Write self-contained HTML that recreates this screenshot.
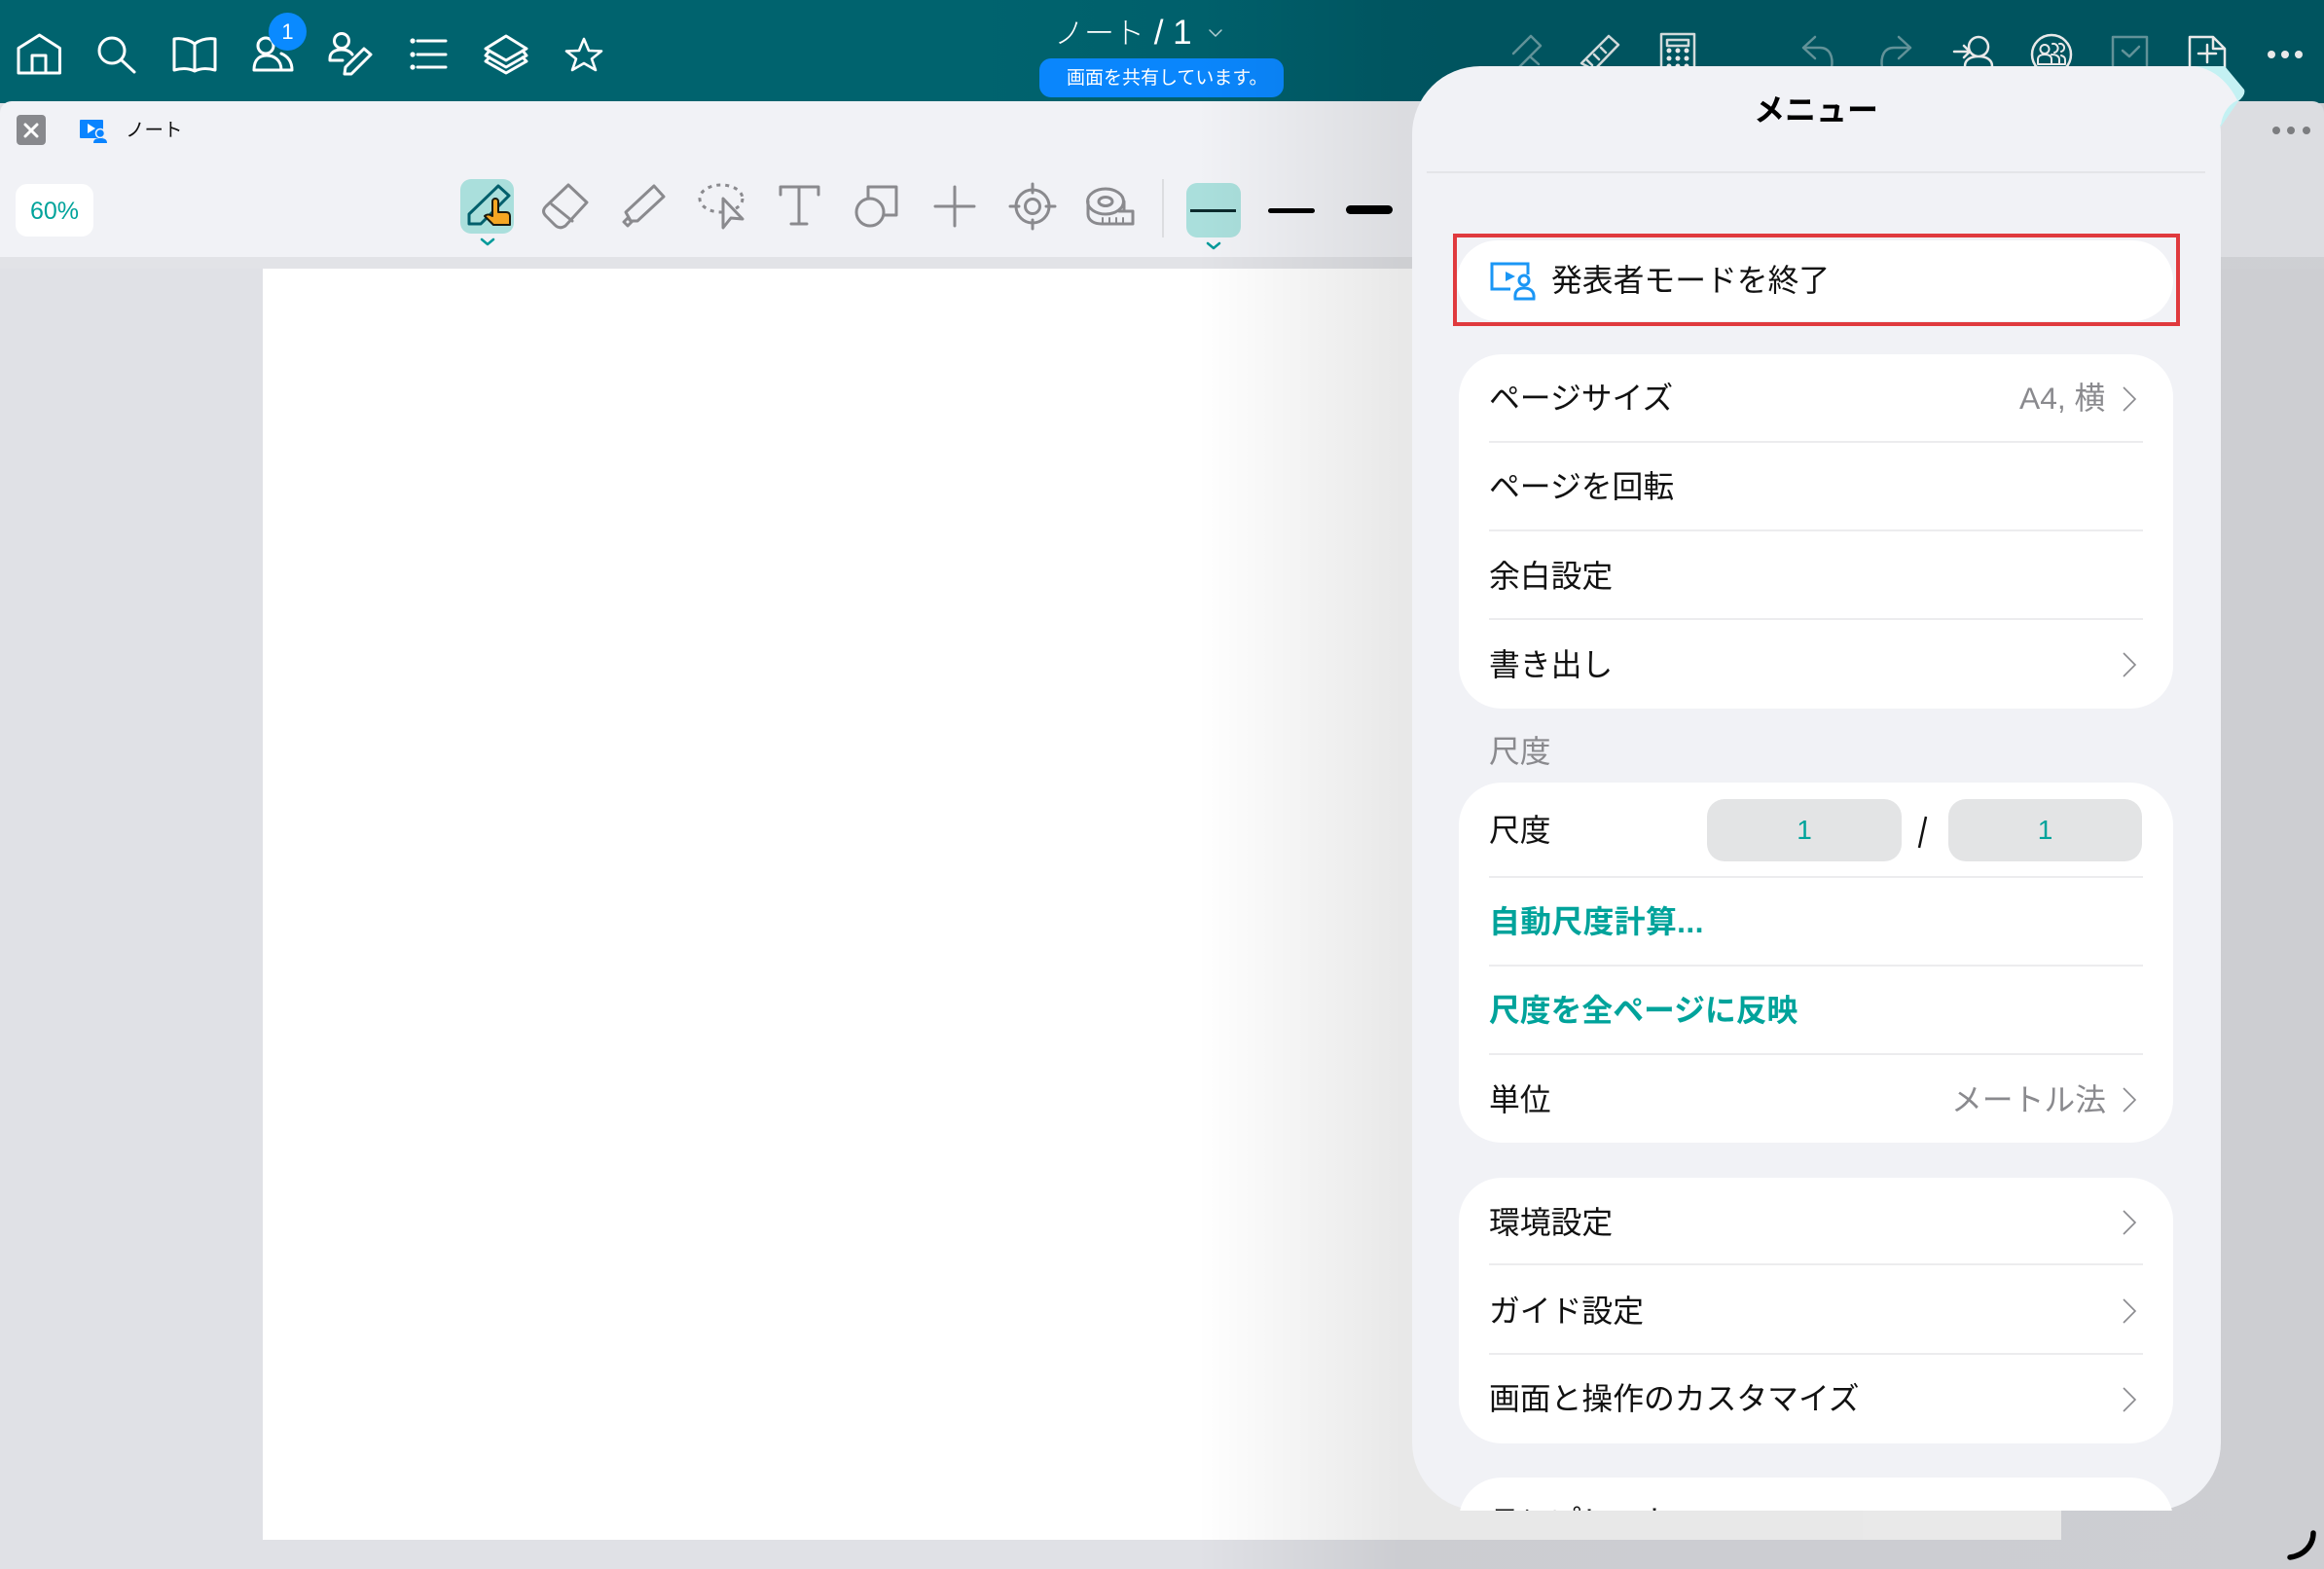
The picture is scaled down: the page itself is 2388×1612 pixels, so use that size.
<!DOCTYPE html>
<html lang="ja"><head><meta charset="utf-8"><title>メニュー</title>
<style>
html,body{margin:0;padding:0;width:2388px;height:1612px;overflow:hidden;background:#e0e1e6}
*{box-sizing:border-box}
body{position:relative;font-family:"Liberation Sans","Noto Sans CJK JP",sans-serif;color:#111}
.a{position:absolute}
.t{position:absolute;white-space:nowrap;line-height:44px;height:44px;font-size:31.8px}
.g{color:#8a8a8e}
.c{color:#00a39b;font-weight:700}
.sep{position:absolute;left:1530px;width:672px;height:2px;background:#ececee}
.card{position:absolute;left:1499px;width:734px;background:#fff;border-radius:44px}
svg{position:absolute;left:0;top:0}
</style></head><body>
<div class="a" style="left:0;top:0;width:2388px;height:106px;background:linear-gradient(to right,#00636e 0,#00636e 1000px,#005c68 1500px,#005c68 2388px)"></div>
<div class="a" style="left:0;top:104px;width:2388px;height:160px;background:#f1f2f6;border-radius:12px 12px 0 0"></div>
<div class="a" style="left:0;top:264px;width:2388px;height:12px;background:#e2e3e7"></div>
<div class="a" style="left:270px;top:276px;width:1848px;height:1306px;background:#fff"></div>
<div class="a" style="left:16px;top:189px;width:80px;height:54px;background:#fff;border-radius:12px"></div>
<div class="a" style="left:473px;top:184px;width:55px;height:56px;background:#aadfdc;border-radius:11px"></div>
<div class="a" style="left:1219px;top:188px;width:56px;height:56px;background:#aadfdc;border-radius:11px"></div>
<div class="a" style="left:1194px;top:184px;width:2px;height:60px;background:#dcdde0"></div>
<div class="a" style="left:1223px;top:215px;width:47px;height:3px;background:#0b2a2c"></div>
<div class="a" style="left:1303px;top:214px;width:48px;height:5px;background:#000;border-radius:3px"></div>
<div class="a" style="left:1383px;top:211px;width:48px;height:9px;background:#000;border-radius:5px"></div>
<div class="a" style="left:1068px;top:60px;width:251px;height:40px;background:#0a86fc;border-radius:12px"></div>
<div class="a" style="left:276px;top:13px;width:39px;height:39px;background:#0a8aff;border-radius:50%;z-index:3"></div>
<div class="t" style="left:276px;top:11px;width:39px;text-align:center;color:#fff;font-size:22px;z-index:4">1</div>
<div class="t" style="left:1083px;top:12px;color:#fff;font-size:31px;font-weight:300">ノート<span style="font-family:'Liberation Sans';font-size:35px"> / 1</span></div>
<div class="t" style="left:1096px;top:59px;color:#fff;font-size:19px">画面を共有しています。</div>
<div class="a" style="left:17px;top:118px;width:30px;height:31px;background:#88898d;border-radius:4px"></div>
<div class="t" style="left:129px;top:112px;font-size:19.5px">ノート</div>
<div class="t" style="left:16px;top:195px;width:80px;text-align:center;color:#00a39b;font-size:25px">60%</div>

<svg width="2388" height="1612" viewBox="0 0 2388 1612" fill="none" stroke-linecap="round" stroke-linejoin="round">
<g stroke="#fff" stroke-width="3">
<path d="M19 75V49.5L40.5 36L61.5 49.5V75Z M33 75V57H47V75"/>
<circle cx="115" cy="52" r="13"/><path d="M125 62L138 74"/>
<path d="M200 45C193 40 186 39 179 40V72C186 70 194 70 200 73C206 70 214 70 221 72V40C214 39 207 40 200 45V72"/>
<circle cx="273" cy="47" r="8"/><path d="M261 72C261 60 268 57 274 57C281 57 289 61 289 72ZM289 72H300C300 63 296 58 289 55"/>
<circle cx="351" cy="42" r="7.5"/><path d="M339 62V60C339 54 344 51 351 51C356 51 360 53 362 56M339 62H352M355 69L374 50L381 56L361 76L354 76Z"/>
<path d="M429 42H458M429 56H458M429 69H458"/>
<path d="M520 37L541 50L520 62L499 50ZM503 52L499 57L520 69L541 57L537 52M503 59L499 63L520 75L541 63L537 59"/>
<path d="M600 40L605 52L618 52.5L608 60.5L612 72L600 65L588 72L592 60.5L582 52.5L595 52Z" stroke-width="2.6"/>
<path d="M1243 31L1249 37L1255 31" stroke-width="1.5" opacity=".7"/>
<g opacity=".9">
<path d="M1653 37L1663 46L1638 72L1625 65ZM1645 49L1650 54M1638 56L1643 61M1631 62L1636 67" stroke-width="2.5"/>
<path d="M1707 72V35H1741V72M1713 41H1735V47H1713Z" stroke-width="2.5"/>
</g>
<path d="M2033 38m-10 10a10 10 0 1 0 20 0a10 10 0 1 0 -20 0M2019 68C2019 62 2024 58 2033 58C2042 58 2047 62 2047 68M2008 53H2024M2018 47L2024 53L2018 59" stroke-width="2.5"/>
<circle cx="2108" cy="56" r="20" stroke-width="2.5"/>
<path d="M2094 66V61C2094 57 2098 56 2101 56C2105 56 2108 57 2108 61V66ZM2101 46a4.5 4.5 0 1 0 .01 0M2109 45a4.5 4.5 0 0 1 2 9M2108 56C2113 56 2116 58 2116 61V66H2108M2116 45a4 4 0 0 1 2 8M2118 57C2121 58 2122 59 2122 62V66H2116" stroke-width="2"/>
<path d="M2250 72V38H2274L2286 50V72M2274 38V50H2286M2268 46V64M2259 55H2277" stroke-width="2.5"/>
</g>
<g fill="#fff" stroke="none">
<circle cx="424" cy="42" r="2.6"/><circle cx="424" cy="56" r="2.6"/><circle cx="424" cy="69" r="2.6"/>
<circle cx="2334" cy="56" r="4"/><circle cx="2348" cy="56" r="4"/><circle cx="2362" cy="56" r="4"/>
<circle cx="1715" cy="52" r="2.5"/><circle cx="1724" cy="52" r="2.5"/><circle cx="1733" cy="52" r="2.5"/>
<circle cx="1715" cy="60" r="2.5"/><circle cx="1724" cy="60" r="2.5"/><circle cx="1733" cy="60" r="2.5"/>
<circle cx="1715" cy="68" r="2.5"/><circle cx="1724" cy="68" r="2.5"/><circle cx="1733" cy="68" r="2.5"/>
</g>
<g stroke="#fff" stroke-width="2.5" opacity=".42">
<path d="M1865 38L1853 49L1865 60M1853 49H1870C1880 49 1884 58 1882 70"/>
<path d="M1951 38L1963 49L1951 60M1963 49H1946C1936 49 1932 58 1934 70"/>
<path d="M2171 70V38H2206V70M2181 52L2188 58L2198 48"/>
<path d="M1573 37L1583 47L1572 58L1581 66M1573 37L1555 55M1572 58L1560 70"/>
</g>
<path d="M26 128L38 140M38 128L26 140" stroke="#fff" stroke-width="3"/>
<rect x="82" y="123" width="24" height="19" fill="#0a84ff" rx="1"/>
<path d="M90 127L98 132L90 137Z" fill="#fff"/>
<circle cx="103" cy="137" r="4.5" fill="#0a84ff" stroke="#f1f2f6" stroke-width="1.5"/>
<path d="M96 147C96 143 99 142 103 142C107 142 110 143 110 147Z" fill="#0a84ff"/>
<path d="M482 220L512 191L523 201L494 230H482Z" stroke="#005f6c" stroke-width="3"/>
<path d="M506 207C506 203 512 203 512 207V218H520C523 218 524 220 524 222V231H507L498 222C500 220 503 220 506 222Z" fill="#f5a623" stroke="#1a1a10" stroke-width="2"/>
<path d="M495 246L501 251L507 246M1241 250L1247 255L1253 250" stroke="#009a9a" stroke-width="2.5"/>
<g stroke="#8a8a8e" stroke-width="3">
<path d="M584 190L603 208L581 232Q575 236 570 231L561 222Q556 217 561 212ZM567 210L588 227"/>
<path d="M672 191L682 202L655 227L648 227L643 218ZM641 228L645 224L649 228L645 232Z"/>
<ellipse cx="741" cy="204" rx="22" ry="14" stroke-dasharray="4 5" stroke-linecap="butt"/>
<path d="M743 204L763 225L751 224L743 234Z" fill="#f1f2f6"/>
<path d="M802 200V192H841V200M821 192V230M813 230H829"/>
<path d="M892 204V192H921V221H908"/><circle cx="894" cy="218" r="14"/>
<path d="M981 192V232M961 212H1001"/>
<circle cx="1061" cy="212" r="17"/><circle cx="1061" cy="212" r="7.5"/><path d="M1061 189V198M1061 226V235M1038 212H1047M1075 212H1084"/>
<ellipse cx="1136" cy="207" rx="18.5" ry="13"/><ellipse cx="1136" cy="207" rx="7" ry="4.5"/>
<path d="M1118 207V220C1118 227 1125 230 1132 230H1164V217H1150M1155 207V216"/>
<path d="M1133 224V230M1140 224V230M1147 224V230M1154 224V230" stroke-width="2"/>
</g>
<circle cx="2339" cy="134" r="4" fill="#88898c"/><circle cx="2354" cy="134" r="4" fill="#88898c"/><circle cx="2370" cy="134" r="4" fill="#88898c"/>
<path d="M2377 1575C2377 1587 2368 1598 2353 1600" stroke="#000" stroke-width="5.5"/>
</svg>

<div class="a" style="left:0;top:0;width:2388px;height:1612px;background:linear-gradient(to right,rgba(0,0,0,0) 1230px,rgba(0,0,0,.09) 1440px,rgba(0,0,0,.085) 2388px)"></div>

<svg width="2388" height="1612" viewBox="0 0 2388 1612" fill="none">
<path d="M2250 68H2286L2306 92Q2308 97 2300 104L2282 130H2250Z" fill="#c4f1f3"/>
<path d="M2200 68H2255Q2283 72 2299 103Q2285 110 2282 128H2200Z" fill="#f1f2f6"/>
</svg>
<div class="a" style="left:1451px;top:68px;width:831px;height:1484px;background:#f1f2f6;border-radius:70px;overflow:hidden">
</div>
<div class="a" style="left:1466px;top:176px;width:800px;height:2px;background:#e4e5e8"></div>
<div class="t" style="left:1451px;top:91px;width:830px;text-align:center;font-size:32px;font-weight:700;color:#000">メニュー</div>

<div class="a" style="left:1493px;top:240px;width:747px;height:95px;border:4px solid #e03a3e"></div>
<div class="a" style="left:1497px;top:247px;width:736px;height:83px;background:#fff;border-radius:42px"></div>
<svg width="2388" height="1612" viewBox="0 0 2388 1612" fill="none">
<path d="M1552 297H1533V271H1570V282" stroke="#1a96f5" stroke-width="3"/>
<path d="M1547 279L1557 284L1547 289Z" fill="#1a96f5"/>
<circle cx="1566" cy="288" r="5" stroke="#1a96f5" stroke-width="3"/>
<path d="M1557 307C1556 299 1560 296 1566 296C1572 296 1577 299 1576 307Z" stroke="#1a96f5" stroke-width="3"/>
</svg>
<div class="t" style="left:1594px;top:266px;">発表者モードを終了</div>

<div class="card" style="top:364px;height:364px"></div>
<div class="sep" style="top:453px"></div><div class="sep" style="top:544px"></div><div class="sep" style="top:635px"></div>
<div class="t" style="left:1530px;top:387px">ページサイズ</div>
<div class="t g" style="left:2075px;top:387px">A4, 横</div>
<div class="t" style="left:1530px;top:478px">ページを回転</div>
<div class="t" style="left:1530px;top:570px">余白設定</div>
<div class="t" style="left:1530px;top:661px">書き出し</div>
<div class="t g" style="left:1530px;top:750px">尺度</div>

<div class="card" style="top:804px;height:370px"></div>
<div class="sep" style="top:900px"></div><div class="sep" style="top:991px"></div><div class="sep" style="top:1082px"></div>
<div class="t" style="left:1530px;top:831px">尺度</div>
<div class="a" style="left:1754px;top:821px;width:200px;height:64px;background:#e3e4e5;border-radius:18px"></div>
<div class="a" style="left:2002px;top:821px;width:199px;height:64px;background:#e3e4e5;border-radius:18px"></div>
<div class="t" style="left:1754px;top:831px;width:200px;text-align:center;color:#00a39b;font-size:28px;font-weight:500">1</div>
<div class="t" style="left:2002px;top:831px;width:199px;text-align:center;color:#00a39b;font-size:28px;font-weight:500">1</div>
<div class="a" style="left:1969px;top:838px;width:13px;height:34px"><svg width="13" height="34" fill="none"><path d="M10 1L3 33" stroke="#111" stroke-width="2.5"/></svg></div>
<div class="t c" style="left:1530px;top:925px;letter-spacing:.4px">自動尺度計算...</div>
<div class="t c" style="left:1530px;top:1016px">尺度を全ページに反映</div>
<div class="t" style="left:1530px;top:1108px">単位</div>
<div class="t g" style="left:2005px;top:1108px">メートル法</div>

<div class="card" style="top:1210px;height:273px"></div>
<div class="sep" style="top:1298px"></div><div class="sep" style="top:1390px"></div>
<div class="t" style="left:1530px;top:1234px">環境設定</div>
<div class="t" style="left:1530px;top:1325px">ガイド設定</div>
<div class="t" style="left:1530px;top:1415px">画面と操作のカスタマイズ</div>

<div class="a" style="left:1451px;top:1518px;width:831px;height:34px;overflow:hidden;border-radius:0 0 70px 70px">
<div class="card" style="left:48px;top:0;height:120px"></div>
<div class="t" style="left:79px;top:23px">テンプレート</div>
</div>

<svg width="2388" height="1612" viewBox="0 0 2388 1612" fill="none" stroke="#8a8a8e" stroke-width="1.6">
<path d="M2182 398L2194 410L2182 422M2182 671L2194 683L2182 695M2182 1118L2194 1130L2182 1142M2182 1244L2194 1256L2182 1268M2182 1335L2194 1347L2182 1359M2182 1426L2194 1438L2182 1450"/>
</svg>
</body></html>
